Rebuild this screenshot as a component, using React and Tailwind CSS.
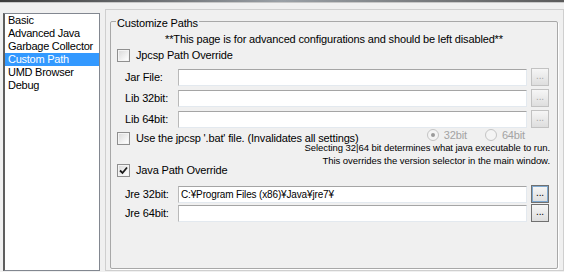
import React from 'react';

const items = ['Basic', 'Advanced Java', 'Garbage Collector', 'Custom Path', 'UMD Browser', 'Debug'];

function CheckBox({ checked }) {
  return (
    <span className="w-[13px] h-[13px] border border-[#8f8f8f] bg-white flex items-center justify-center shrink-0">
      <span className="w-[11px] h-[11px] border border-[#f4f4f4] bg-gradient-to-br from-[#dcdcdc] to-white flex items-center justify-center">
        {checked && (
          <svg width="9" height="9" viewBox="0 0 9 9">
            <path d="M1 4.5 L3.5 7 L8 1.5" fill="none" stroke="#1c1c1c" strokeWidth="1.8" />
          </svg>
        )}
      </span>
    </span>
  );
}

function Radio({ on, label }) {
  return (
    <span className="flex items-center gap-[5px] text-[#a3a3a3]">
      <span className="w-[12px] h-[12px] rounded-full border border-[#c4c4c4] bg-[#f4f4f4] flex items-center justify-center">
        {on && <span className="w-[4px] h-[4px] rounded-full bg-[#9a9a9a]" />}
      </span>
      {label}
    </span>
  );
}

function PathRow({ label, value, enabled, main, className }) {
  return (
    <div className={`flex items-center h-[18px] ${className || ''}`}>
      <span className="w-[53px] pl-[14px] box-content whitespace-nowrap">{label}</span>
      <div className="w-[349px] h-[17px] bg-white border border-[#e3e9ef] border-t-[#a5a5a5] border-l-[#b9b9b9] flex items-center pl-[2px] text-[10px] overflow-hidden whitespace-nowrap">
        {value}
      </div>
      <button
        className={`ml-[4px] w-[18px] h-[18px] flex items-center justify-center text-[10px] leading-none pb-[3px] bg-gradient-to-b from-[#f6f6f6] to-[#dedede] ${
          enabled ? 'text-black border border-[#707070]' : 'text-[#a8a8a8] border border-[#c2c2c2]'
        } ${main ? 'shadow-[inset_0_0_0_1px_#7fa9d0]' : ''}`}
      >
        ...
      </button>
    </div>
  );
}

export default function App() {
  return (
    <div className="w-[564px] h-[272px] bg-[#f0f0f0] overflow-hidden font-['Tahoma','Liberation_Sans',sans-serif] text-[11px] leading-[13px] tracking-[-0.15px] text-black">
      <div className="h-[3px] bg-gradient-to-r from-[#3c3c3c] via-[#9aa0a6] to-[#5a5a5a] border-b border-[#c8c8c8]" />
      <div className="flex items-start">
        <div className="ml-[3px] mt-[10px] w-[97px] h-[258px] bg-white border border-[#828790] border-l-[#5e5e5e] border-l-2 tracking-[-0.25px]">
          {items.map((it) => (
            <div
              key={it}
              className={`h-[13px] pl-[3px] whitespace-nowrap ${it === 'Custom Path' ? 'bg-[#3399ff] text-white' : ''}`}
            >
              {it}
            </div>
          ))}
        </div>
        <div className="ml-[5px] mt-[6px] w-[459px] h-[262px] border border-[#cfcfcf] pt-[11px] pl-[4px] pr-[4px]">
          <div className="relative w-[448px] h-[248px] border border-[#a8a8a8] shadow-[1px_1px_0_#ffffff] rounded-[2px] whitespace-nowrap">
            <span className="absolute left-[5px] -top-[5px] px-[1px] bg-[#f0f0f0] leading-[13px]">Customize Paths</span>
            <div className="mt-[11px] text-center">**This page is for advanced configurations and should be left disabled**</div>
            <div className="mt-[3px] ml-[6px] flex items-center gap-[6px]">
              <CheckBox />
              <span>Jpcsp Path Override</span>
            </div>
            <PathRow label="Jar File:" className="mt-[6px]" />
            <PathRow label="Lib 32bit:" className="mt-[3px]" />
            <PathRow label="Lib 64bit:" className="mt-[3px]" />
            <div className="mt-[4px] flex items-start pr-[32px]">
              <div className="ml-[6px] flex items-center gap-[6px]">
                <CheckBox />
                <span>Use the jpcsp '.bat' file. (Invalidates all settings)</span>
              </div>
              <div className="ml-auto -mt-[3px] flex gap-[18px] h-[12px] items-center">
                <Radio on label="32bit" />
                <Radio label="64bit" />
              </div>
            </div>
            <div className="-mt-[4px] pr-[7px] text-[9.5px] leading-[13px] tracking-[-0.05px] text-right">
              <div>Selecting 32|64 bit determines what java executable to run.</div>
              <div>This overrides the version selector in the main window.</div>
            </div>
            <div className="-mt-[3px] ml-[6px] flex items-center gap-[6px]">
              <CheckBox checked />
              <span>Java Path Override</span>
            </div>
            <PathRow
              label="Jre 32bit:"
              value="C:¥Program Files (x86)¥Java¥jre7¥"
              enabled
              main
              className="mt-[8px]"
            />
            <PathRow label="Jre 64bit:" enabled className="mt-[1px]" />
          </div>
        </div>
      </div>
    </div>
  );
}
